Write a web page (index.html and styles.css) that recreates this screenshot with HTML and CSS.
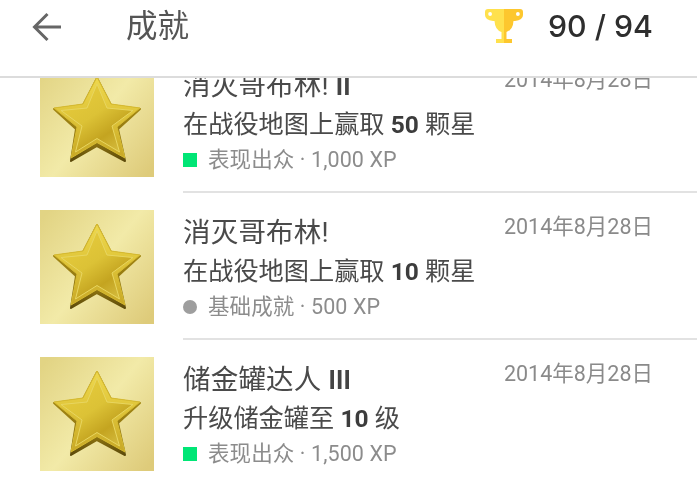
FILE: index.html
```html
<!DOCTYPE html>
<html lang="zh-CN">
<head>
<meta charset="utf-8">
<title>成就</title>
<link rel="stylesheet" href="styles.css">
</head>
<body>
<svg class="defs" width="0" height="0" aria-hidden="true">
  <defs>
    <linearGradient id="tile" x1="0" y1="0.1" x2="1" y2="0.9">
      <stop offset="0" stop-color="#e2d484"/>
      <stop offset="0.5" stop-color="#f2eaa8"/>
      <stop offset="1" stop-color="#decb7a"/>
    </linearGradient>
    <linearGradient id="edge" x1="0" y1="0.3" x2="0" y2="1">
      <stop offset="0" stop-color="#a88c14"/>
      <stop offset="0.7" stop-color="#8c7210"/>
      <stop offset="1" stop-color="#5c4a0a"/>
    </linearGradient>
    <linearGradient id="bevel" x1="0" y1="0" x2="0" y2="1">
      <stop offset="0" stop-color="#eed84e"/>
      <stop offset="0.45" stop-color="#e0c63a"/>
      <stop offset="1" stop-color="#c8a826"/>
    </linearGradient>
    <linearGradient id="face" x1="0.1" y1="0.1" x2="0.75" y2="1">
      <stop offset="0" stop-color="#e6cb3c"/>
      <stop offset="0.45" stop-color="#dcc236"/>
      <stop offset="0.75" stop-color="#c4a420"/>
      <stop offset="1" stop-color="#d4ba3c"/>
    </linearGradient>
    <symbol id="star" viewBox="0 0 114 114">
      <rect width="114" height="114" fill="url(#tile)"/>
      <path d="M57 15 L71 42 L100 46 L78 66 L85 98 L57 83 L31 98 L36 66 L14 46 L43 42 Z" fill="url(#edge)" stroke="url(#edge)" stroke-width="2" stroke-linejoin="round"/>
      <path d="M57 14 L71 41 L100 45 L77 64 L85 95 L57 79.500 L31 95 L37 64 L14 45 L43 41 Z" fill="url(#bevel)" stroke="#d6ba30" stroke-width="1" stroke-linejoin="round"/>
      <path d="M57 21 L67 45 L93 47.500 L72 63 L79.500 89 L57 75.500 L35.500 89 L42 63 L21 47.500 L47 45 Z" fill="url(#face)" stroke="#e8d660" stroke-width="1" stroke-linejoin="round"/>
    </symbol>
  </defs>
</svg>
<div class="page">
  <header class="topbar">
    <svg class="back" viewBox="0 0 30 30" width="30" height="30" aria-hidden="true">
      <path d="M29 15 H3 M15.500 2 L2.500 15 L15.500 28" fill="none" stroke="#666" stroke-width="3"/>
    </svg>
    <h1 class="title">成就</h1>
    <svg class="trophy" viewBox="0 0 38 35" width="38" height="35" aria-hidden="true">
      <path d="M19 0 H3 Q0 0 0 3 V6 Q0 11 8 12 H9.500 Q10 21 16.500 23 V30 H11 V34 H19 Z M3.200 5 a1.900 1.900 0 1 0 3.800 0 a1.900 1.900 0 1 0 -3.800 0 Z" fill="#ffe14d" fill-rule="evenodd"/>
      <path d="M19 0 H35 Q38 0 38 3 V6 Q38 11 30 12 H28.500 Q28 21 21.500 23 V30 H27 V34 H19 Z M34.800 5 a1.900 1.900 0 1 1 -3.800 0 a1.900 1.900 0 1 1 3.800 0 Z" fill="#fdc72e" fill-rule="evenodd"/>
    </svg>
    <span class="score">90 / 94</span>
  </header>
  <main class="list">
    <article class="row">
      <svg class="badge" width="114" height="114" aria-hidden="true"><use href="#star"/></svg>
      <div class="body">
        <div class="headline"><span class="name">消灭哥布林! <b>II</b></span><span class="date">2014年8月28日</span></div>
        <p class="desc">在战役地图上赢取 <b>50</b> 颗星</p>
        <p class="meta"><i class="mark mark-green"></i>表现出众 · 1,000 XP</p>
      </div>
    </article>
    <article class="row">
      <svg class="badge" width="114" height="114" aria-hidden="true"><use href="#star"/></svg>
      <div class="body">
        <div class="headline"><span class="name">消灭哥布林!</span><span class="date">2014年8月28日</span></div>
        <p class="desc">在战役地图上赢取 <b>10</b> 颗星</p>
        <p class="meta"><i class="mark mark-grey"></i>基础成就 · 500 XP</p>
      </div>
    </article>
    <article class="row">
      <svg class="badge" width="114" height="114" aria-hidden="true"><use href="#star"/></svg>
      <div class="body body-last">
        <div class="headline"><span class="name">储金罐达人 <b>III</b></span><span class="date">2014年8月28日</span></div>
        <p class="desc">升级储金罐至 <b>10</b> 级</p>
        <p class="meta"><i class="mark mark-green"></i>表现出众 · 1,500 XP</p>
      </div>
    </article>
  </main>
</div>
</body>
</html>
```
FILE: styles.css
```css
* { box-sizing: border-box; }
html, body { margin: 0; padding: 0; background: #fff; }
.defs { position: absolute; }
.page {
  width: 700px;
  height: 482px;
  overflow: hidden;
  font-family: Roboto, "Noto Sans CJK SC", sans-serif;
  filter: blur(0.45px);
}
.topbar {
  position: relative;
  z-index: 1;
  height: 78px;
  display: flex;
  align-items: flex-start;
  background: #fff;
  border-bottom: 2px solid #dcdcdc;
  margin-right: 3px;
}
.back { margin: 12px 0 0 32px; flex: none; }
.title {
  margin: 6px 0 0 64px;
  font-size: 31.500px;
  line-height: 42px;
  font-weight: 400;
  color: #555;
  flex: 1;
}
.trophy { margin: 9px 0 0; flex: none; }
.score {
  margin: 5px 44px 0 25px;
  font-family: Inter, "Noto Sans CJK SC", sans-serif;
  font-size: 30.300px;
  line-height: 42px;
  font-weight: 500;
  color: #2e2e2e;
  white-space: nowrap;
}
.list { margin-top: -32px; }
.row {
  display: flex;
  align-items: flex-start;
  gap: 29px;
  padding: 0 3px 0 40px;
  height: 147px;
}
.badge { flex: none; margin-top: 17px; }
.body {
  flex: 1;
  height: 147px;
  padding: 20px 44px 0 0;
  border-bottom: 2px solid #e2e2e2;
}
.body-last { border-bottom: 0; }
.headline {
  display: flex;
  justify-content: space-between;
  align-items: flex-start;
  height: 39px;
}
.name { font-size: 27.500px; line-height: 40px; color: #4a4a4a; letter-spacing: 0.2px; }
.name b { color: #444; font-weight: 700; font-size: 25px; }
.date { font-size: 21.500px; line-height: 28px; color: #8a8a8a; white-space: nowrap; }
.desc {
  margin: 0;
  font-size: 25.200px;
  line-height: 40px;
  color: #4a4a4a;
}
.desc b { font-weight: 700; font-size: 24.500px; color: #3c3c3c; }
.meta {
  margin: 0;
  display: flex;
  align-items: center;
  font-size: 21.500px;
  line-height: 30px;
  color: #8c8c8c;
  letter-spacing: 0.1px;
}
.mark { flex: none; width: 14px; height: 14px; margin-right: 11px; }
.mark-green { background: #00e676; }
.mark-grey { background: #9e9e9e; border-radius: 50%; }
```
